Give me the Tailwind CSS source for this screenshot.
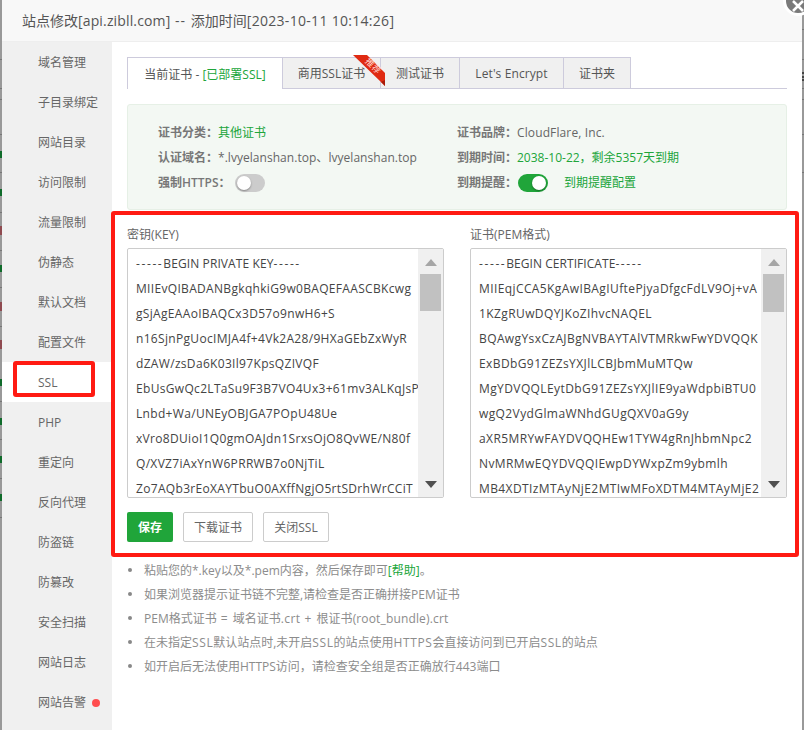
<!DOCTYPE html>
<html lang="zh">
<head>
<meta charset="utf-8">
<title>站点修改</title>
<script src="https://cdn.jsdelivr.net/npm/@tailwindcss/browser@4"></script>
</head>
<body class="bg-white">
<div class="relative flex h-[730px] w-[804px] overflow-hidden font-['Open_Sans','Noto_Sans_CJK_SC',sans-serif] text-[12px] text-[#555]">
  <!-- page behind, left edge -->
  <div class="relative w-[2px] shrink-0 bg-[#999]">
    <i class="absolute top-[59px] left-0 h-px w-[2px] bg-[#777]"></i>
    <i class="absolute top-[88px] left-0 h-px w-[2px] bg-[#777]"></i>
    <i class="absolute top-[99px] left-0 h-px w-[2px] bg-[#777]"></i>
    <i class="absolute top-[134px] left-0 h-px w-[2px] bg-[#777]"></i>
    <i class="absolute top-[151px] left-0 h-[7px] w-[2px] bg-[#0f6b2a]"></i>
    <i class="absolute top-[172px] left-0 h-px w-[2px] bg-[#777]"></i>
    <i class="absolute top-[189px] left-0 h-[7px] w-[2px] bg-[#0f6b2a]"></i>
    <i class="absolute top-[212px] left-0 h-px w-[2px] bg-[#777]"></i>
    <i class="absolute top-[226px] left-0 h-[9px] w-[2px] bg-[#8f4a50]"></i>
    <i class="absolute top-[250px] left-0 h-px w-[2px] bg-[#777]"></i>
    <i class="absolute top-[265px] left-0 h-[7px] w-[2px] bg-[#0f6b2a]"></i>
    <i class="absolute top-[287px] left-0 h-px w-[2px] bg-[#777]"></i>
    <i class="absolute top-[302px] left-0 h-[9px] w-[2px] bg-[#8f4a50]"></i>
    <i class="absolute top-[326px] left-0 h-px w-[2px] bg-[#777]"></i>
    <i class="absolute top-[340px] left-0 h-[9px] w-[2px] bg-[#8f4a50]"></i>
    <i class="absolute top-[379px] left-0 h-[7px] w-[2px] bg-[#0f6b2a]"></i>
    <i class="absolute top-[401px] left-0 h-px w-[2px] bg-[#777]"></i>
    <i class="absolute top-[418px] left-0 h-[7px] w-[2px] bg-[#0f6b2a]"></i>
    <i class="absolute top-[439px] left-0 h-px w-[2px] bg-[#777]"></i>
    <i class="absolute top-[456px] left-0 h-[7px] w-[2px] bg-[#0f6b2a]"></i>
    <i class="absolute top-[478px] left-0 h-px w-[2px] bg-[#777]"></i>
    <i class="absolute top-[494px] left-0 h-[7px] w-[2px] bg-[#0f6b2a]"></i>
    <i class="absolute top-[517px] left-0 h-px w-[2px] bg-[#777]"></i>
  </div>

  <!-- dialog -->
  <div class="flex min-w-0 flex-1 flex-col bg-white">
    <div class="flex h-[42px] shrink-0 items-center border-b border-[#eee] bg-[#f8f8f8] pl-[20px] text-[14px] whitespace-pre text-[#555]">站点修改<span class="tracking-[0.15px]">[api.zibll.com]</span><span class="tracking-[1px]"> -- </span>添加时间<span class="tracking-[0.3px]">[2023-10-11 10:14:26]</span></div>
    <div class="flex min-h-0 flex-1">
      <!-- sidebar -->
      <nav class="w-[110px] shrink-0 bg-[#f0f0f0] text-[#666]">
        <div class="flex h-[40px] items-center pt-[2px] pl-[36px]">域名管理</div>
        <div class="flex h-[40px] items-center pt-[2px] pl-[36px]">子目录绑定</div>
        <div class="flex h-[40px] items-center pt-[2px] pl-[36px]">网站目录</div>
        <div class="flex h-[40px] items-center pt-[2px] pl-[36px]">访问限制</div>
        <div class="flex h-[40px] items-center pt-[2px] pl-[36px]">流量限制</div>
        <div class="flex h-[40px] items-center pt-[2px] pl-[36px]">伪静态</div>
        <div class="flex h-[40px] items-center pt-[2px] pl-[36px]">默认文档</div>
        <div class="flex h-[40px] items-center pt-[2px] pl-[36px]">配置文件</div>
        <div class="flex h-[40px] items-center bg-white pt-[2px] pl-[36px]">SSL</div>
        <div class="flex h-[40px] items-center pt-[2px] pl-[36px]">PHP</div>
        <div class="flex h-[40px] items-center pt-[2px] pl-[36px]">重定向</div>
        <div class="flex h-[40px] items-center pt-[2px] pl-[36px]">反向代理</div>
        <div class="flex h-[40px] items-center pt-[2px] pl-[36px]">防盗链</div>
        <div class="flex h-[40px] items-center pt-[2px] pl-[36px]">防篡改</div>
        <div class="flex h-[40px] items-center pt-[2px] pl-[36px]">安全扫描</div>
        <div class="flex h-[40px] items-center pt-[2px] pl-[36px]">网站日志</div>
        <div class="flex h-[40px] items-center gap-[6px] pt-[2px] pl-[36px]">网站告警<span class="h-[8px] w-[8px] rounded-full bg-[#ff4d4f]"></span></div>
      </nav>

      <!-- content -->
      <main class="min-w-0 flex-1 px-[15px] pt-[15px]">
        <!-- tabs -->
        <div class="relative flex h-[32px] border-b border-[#cdcbdc]">
          <div class="z-10 -mb-px flex h-[32px] w-[156px] items-center justify-center border-x border-t border-[#cdcbdc] bg-white pt-[2px] whitespace-nowrap">当前证书 -&nbsp;<span class="text-[#20a53a]">[已部署SSL]</span></div>
          <div class="flex w-[98px] items-center justify-center border-t border-r border-[#cdcbdc] bg-[#f0f0f0] pt-[2px] whitespace-nowrap">商用SSL证书</div>
          <div class="flex w-[79px] items-center justify-center border-t border-r border-[#cdcbdc] bg-[#f0f0f0] pt-[2px] whitespace-nowrap">测试证书</div>
          <div class="flex w-[104px] items-center justify-center border-t border-r border-[#cdcbdc] bg-[#f0f0f0] pt-[2px] tracking-[0.1px] whitespace-nowrap">Let's Encrypt</div>
          <div class="flex w-[67px] items-center justify-center border-t border-r border-[#cdcbdc] bg-[#f0f0f0] pt-[2px] whitespace-nowrap">证书夹</div>
          <!-- recommended ribbon -->
          <svg class="absolute top-[-2px] left-[226px] z-20" width="32" height="34" viewBox="0 0 32 34">
            <polygon points="0,0 14,0 32,18 32,31 28,27" fill="#e02a12"/>
            <polygon points="28,27 32,31 32,25" fill="#a81c0a"/>
          </svg>
          <span class="absolute top-[3px] left-[237px] z-30 rotate-45 text-[9px] leading-[12px] whitespace-nowrap text-[#ffd9d2]">推荐</span>
        </div>

        <!-- summary -->
        <div class="mt-[15px] grid h-[106px] grid-cols-[299px_1fr] rounded-[3px] border border-[#e6f0e6] bg-[#f3f8f3] pt-[15px] pl-[30px]">
          <div>
            <div class="flex h-[25px] items-center whitespace-nowrap"><span class="w-[60px] font-semibold text-[#777]">证书分类&#65306;</span><span class="text-[#20a53a]">其他证书</span></div>
            <div class="flex h-[25px] items-center whitespace-nowrap"><span class="w-[60px] font-semibold text-[#777]">认证域名&#65306;</span><span class="tracking-[0.04px] text-[#666]">*.lvyelanshan.top、lvyelanshan.top</span></div>
            <div class="flex h-[25px] items-center whitespace-nowrap"><span class="w-[77px] font-semibold text-[#777]">强制HTTPS&#65306;</span><span class="relative h-[18px] w-[30px] rounded-full bg-[#ccc]"><span class="absolute top-[2px] left-[2px] h-[14px] w-[14px] rounded-full bg-white shadow-[0_1px_2px_rgba(0,0,0,0.35)]"></span></span></div>
          </div>
          <div>
            <div class="flex h-[25px] items-center whitespace-nowrap"><span class="w-[60px] font-semibold text-[#777]">证书品牌&#65306;</span><span class="tracking-[0.12px] text-[#666]">CloudFlare, Inc.</span></div>
            <div class="flex h-[25px] items-center whitespace-nowrap"><span class="w-[60px] font-semibold text-[#777]">到期时间&#65306;</span><span class="text-[#20a53a]">2038-10-22&#65292;剩余5357天到期</span></div>
            <div class="flex h-[25px] items-center whitespace-nowrap"><span class="w-[61px] font-semibold text-[#777]">到期提醒&#65306;</span><span class="relative h-[18px] w-[30px] rounded-full bg-[#20a53a]"><span class="absolute top-[2px] right-[2px] h-[14px] w-[14px] rounded-full bg-white shadow-[0_1px_2px_rgba(0,0,0,0.35)]"></span></span><span class="ml-[16px] text-[#20a53a]">到期提醒配置</span></div>
          </div>
        </div>

        <!-- key / cert -->
        <div class="mt-[16px] grid grid-cols-[317px_317px] gap-x-[26px]">
          <div>
            <div class="h-[22px] pt-[1px] leading-[16px] text-[#666]">密钥(KEY)</div>
            <div class="flex h-[250px] overflow-hidden rounded-[2px] border border-[#ccc]">
              <div class="min-w-0 flex-1 overflow-hidden pt-[2px] pl-[8px] leading-[25px] tracking-[0.32px] whitespace-nowrap text-[#444]">
                <div><span class="tracking-[1.6px]">-----</span><span class="tracking-[0.1px]">BEGIN PRIVATE KEY</span><span class="tracking-[1.6px]">-----</span></div>
                <div>MIIEvQIBADANBgkqhkiG9w0BAQEFAASCBKcwg</div>
                <div>gSjAgEAAoIBAQCx3D57o9nwH6+S</div>
                <div>n16SjnPgUocIMJA4f+4Vk2A28/9HXaGEbZxWyR</div>
                <div>dZAW/zsDa6K03Il97KpsQZIVQF</div>
                <div>EbUsGwQc2LTaSu9F3B7VO4Ux3+61mv3ALKqJsP</div>
                <div>Lnbd+Wa/UNEyOBJGA7POpU48Ue</div>
                <div>xVro8DUioI1Q0gmOAJdn1SrxsOjO8QvWE/N80f</div>
                <div>Q/XVZ7iAxYnW6PRRWB7o0NjTiL</div>
                <div>Zo7AQb3rEoXAYTbuO0AXffNgjO5rtSDrhWrCCiT</div>
              </div>
              <div class="flex w-[25px] shrink-0 flex-col items-center bg-[#f0f0f0] pt-[10px]">
                <svg width="12" height="7" viewBox="0 0 12 7"><polygon points="6,0 12,7 0,7" fill="#a6a6a6"/></svg>
                <div class="mt-[8px] h-[37px] w-[21px] bg-[#c1c1c1]"></div>
                <svg class="mt-[170px]" width="12" height="7" viewBox="0 0 12 7"><polygon points="0,0 12,0 6,7" fill="#505050"/></svg>
              </div>
            </div>
          </div>
          <div>
            <div class="h-[22px] pt-[1px] leading-[16px] text-[#666]">证书(PEM格式)</div>
            <div class="flex h-[250px] overflow-hidden rounded-[2px] border border-[#ccc]">
              <div class="min-w-0 flex-1 overflow-hidden pt-[2px] pl-[8px] leading-[25px] tracking-[0.4px] whitespace-nowrap text-[#444]">
                <div><span class="tracking-[1.6px]">-----</span><span class="tracking-[0.05px]">BEGIN CERTIFICATE</span><span class="tracking-[1.6px]">-----</span></div>
                <div>MIIEqjCCA5KgAwIBAgIUftePjyaDfgcFdLV9Oj+vA</div>
                <div>1KZgRUwDQYJKoZIhvcNAQEL</div>
                <div>BQAwgYsxCzAJBgNVBAYTAlVTMRkwFwYDVQQK</div>
                <div>ExBDbG91ZEZsYXJlLCBJbmMuMTQw</div>
                <div>MgYDVQQLEytDbG91ZEZsYXJlIE9yaWdpbiBTU0</div>
                <div>wgQ2VydGlmaWNhdGUgQXV0aG9y</div>
                <div>aXR5MRYwFAYDVQQHEw1TYW4gRnJhbmNpc2</div>
                <div>NvMRMwEQYDVQQIEwpDYWxpZm9ybmlh</div>
                <div>MB4XDTIzMTAyNjE2MTIwMFoXDTM4MTAyMjE2</div>
              </div>
              <div class="flex w-[25px] shrink-0 flex-col items-center bg-[#f0f0f0] pt-[10px]">
                <svg width="12" height="7" viewBox="0 0 12 7"><polygon points="6,0 12,7 0,7" fill="#a6a6a6"/></svg>
                <div class="mt-[8px] h-[38px] w-[21px] bg-[#c1c1c1]"></div>
                <svg class="mt-[169px]" width="12" height="7" viewBox="0 0 12 7"><polygon points="0,0 12,0 6,7" fill="#505050"/></svg>
              </div>
            </div>
          </div>
        </div>

        <!-- actions -->
        <div class="mt-[14px] flex gap-[10px]">
          <div class="flex h-[30px] w-[46px] items-center justify-center rounded-[2px] bg-[#20a53a] pt-[2px] font-bold text-white">保存</div>
          <div class="flex h-[30px] w-[70px] items-center justify-center rounded-[2px] border border-[#ccc] bg-white pt-[2px] text-[#666]">下载证书</div>
          <div class="flex h-[30px] w-[66px] items-center justify-center rounded-[2px] border border-[#ccc] bg-white pt-[2px] text-[#666]">关闭SSL</div>
        </div>

        <!-- notes -->
        <ul class="mt-[16px] text-[#8c8c8c]">
          <li class="flex h-[24px] items-center whitespace-pre"><span class="mr-[12px] ml-[1px] h-[4px] w-[4px] rounded-full bg-[#888]"></span><span class="pt-[1px]">粘贴您的*.key以及*.pem内容&#65292;然后保存即可<span class="text-[#20a53a]">[帮助]</span>。</span></li>
          <li class="flex h-[24px] items-center whitespace-pre"><span class="mr-[12px] ml-[1px] h-[4px] w-[4px] rounded-full bg-[#888]"></span><span class="pt-[1px]">如果浏览器提示证书链不完整,请检查是否正确拼接PEM证书</span></li>
          <li class="flex h-[24px] items-center whitespace-pre"><span class="mr-[12px] ml-[1px] h-[4px] w-[4px] rounded-full bg-[#888]"></span><span class="pt-[1px]">PEM格式证书<span class="tracking-[1px]"> = </span>域名证书<span class="tracking-[0.4px]">.crt</span><span class="tracking-[1px]"> + </span>根证书<span class="tracking-[0.15px]">(root_bundle).crt</span></span></li>
          <li class="flex h-[24px] items-center whitespace-pre"><span class="mr-[12px] ml-[1px] h-[4px] w-[4px] rounded-full bg-[#888]"></span><span class="pt-[1px]">在未指定<span class="tracking-[0.6px]">SSL</span>默认站点时,未开启<span class="tracking-[0.6px]">SSL</span>的站点使用<span class="tracking-[0.6px]">HTTPS</span>会直接访问到已开启<span class="tracking-[0.6px]">SSL</span>的站点</span></li>
          <li class="flex h-[24px] items-center whitespace-pre"><span class="mr-[12px] ml-[1px] h-[4px] w-[4px] rounded-full bg-[#888]"></span><span class="pt-[1px]">如开启后无法使用HTTPS访问&#65292;请检查安全组是否正确放行443端口</span></li>
        </ul>
      </main>
    </div>
  </div>

  <!-- page behind, right edge -->
  <div class="relative w-[2px] shrink-0 bg-[#999]">
    <i class="absolute top-[29px] left-0 h-px w-[2px] bg-[#777]"></i>
    <i class="absolute top-[59px] left-0 h-px w-[2px] bg-[#777]"></i>
    <i class="absolute top-[72px] left-0 h-[2px] w-[2px] bg-[#444]"></i>
    <i class="absolute top-[76px] left-0 h-[2px] w-[2px] bg-[#444]"></i>
    <i class="absolute top-[79px] left-0 h-[2px] w-[2px] bg-[#444]"></i>
    <i class="absolute top-[88px] left-0 h-px w-[2px] bg-[#777]"></i>
    <i class="absolute top-[99px] left-0 h-px w-[2px] bg-[#777]"></i>
    <i class="absolute top-[134px] left-0 h-px w-[2px] bg-[#777]"></i>
    <i class="absolute top-[172px] left-0 h-px w-[2px] bg-[#777]"></i>
  </div>

  <!-- close button -->
  <div class="absolute top-[-14px] left-[783px] flex h-[30px] w-[30px] items-center justify-center rounded-full border-[3px] border-white bg-[#7a7a7a]">
    <svg class="mt-[10px]" width="14" height="14" viewBox="0 0 14 14"><path d="M2 2 12 12M12 2 2 12" stroke="#fff" stroke-width="2.5" fill="none"/></svg>
  </div>

  <!-- red annotation boxes -->
  <div class="pointer-events-none absolute top-[361px] left-[13px] h-[36px] w-[82px] rounded-[3px] border-4 border-[#ff1a12]"></div>
  <div class="pointer-events-none absolute top-[211px] left-[111px] h-[346px] w-[688px] rounded-[3px] border-4 border-[#ff1a12]"></div>
</div>
</body>
</html>
